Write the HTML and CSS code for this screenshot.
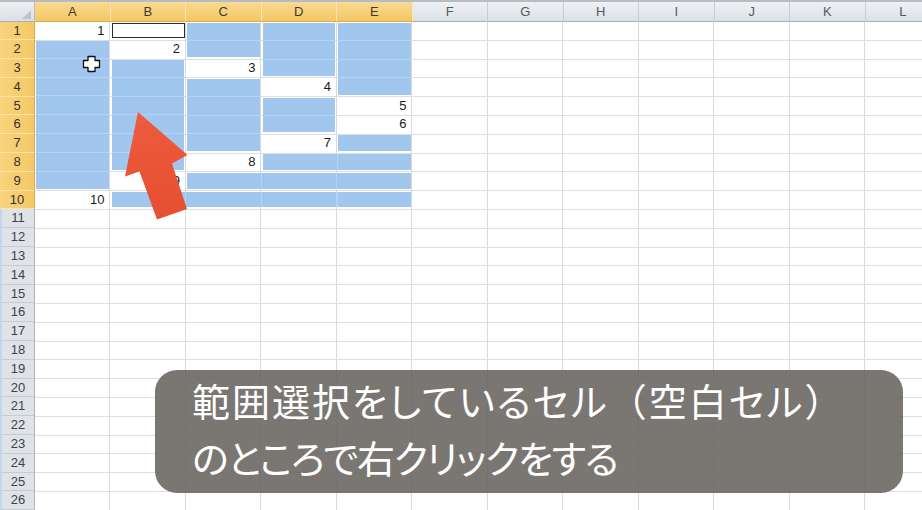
FILE: index.html
```html
<!DOCTYPE html>
<html lang="ja">
<head>
<meta charset="utf-8">
<title>Excel</title>
<link rel="stylesheet" href="styles.css">
</head>
<body>
<div class="topbar"></div>
<div class="sheet">
  <div class="corner"></div>
  <div class="ch on">A</div>
  <div class="ch on">B</div>
  <div class="ch on">C</div>
  <div class="ch on">D</div>
  <div class="ch on">E</div>
  <div class="ch">F</div>
  <div class="ch">G</div>
  <div class="ch">H</div>
  <div class="ch">I</div>
  <div class="ch">J</div>
  <div class="ch">K</div>
  <div class="ch">L</div>
  <div class="rh on">1</div>
  <div class="rh on">2</div>
  <div class="rh on">3</div>
  <div class="rh on">4</div>
  <div class="rh on">5</div>
  <div class="rh on">6</div>
  <div class="rh on">7</div>
  <div class="rh on">8</div>
  <div class="rh on">9</div>
  <div class="rh on">10</div>
  <div class="rh">11</div>
  <div class="rh">12</div>
  <div class="rh">13</div>
  <div class="rh">14</div>
  <div class="rh">15</div>
  <div class="rh">16</div>
  <div class="rh">17</div>
  <div class="rh">18</div>
  <div class="rh">19</div>
  <div class="rh">20</div>
  <div class="rh">21</div>
  <div class="rh">22</div>
  <div class="rh">23</div>
  <div class="rh">24</div>
  <div class="rh">25</div>
  <div class="rh">26</div>

  <div class="cells"></div>

  <div class="blk b-a2a9"></div>
  <div class="blk b-b3b8"></div>
  <div class="blk b-c1c2"></div>
  <div class="blk b-c4c7"></div>
  <div class="blk b-d1d3"></div>
  <div class="blk b-d5d6"></div>
  <div class="blk b-e1e4"></div>
  <div class="blk b-e7"></div>
  <div class="blk b-d8e8"></div>
  <div class="blk b-c9e9"></div>
  <div class="blk b-b10e10"></div>

  <div class="active"></div>

  <div class="val v-a1">1</div>
  <div class="val v-b2">2</div>
  <div class="val v-c3">3</div>
  <div class="val v-d4">4</div>
  <div class="val v-e5">5</div>
  <div class="val v-e6">6</div>
  <div class="val v-d7">7</div>
  <div class="val v-c8">8</div>
  <div class="val v-b9">9</div>
  <div class="val v-a10">10</div>
</div>

<svg class="overlay" width="922" height="510" viewBox="0 0 922 510" aria-hidden="true">
  <defs>
    <linearGradient id="ag" x1="0" y1="0" x2="0" y2="1">
      <stop offset="0" stop-color="#ee5b3e"/>
      <stop offset="1" stop-color="#e64f31"/>
    </linearGradient>
  </defs>
  <polygon points="138,112 187.5,155 172,163.5 187,209 157,219.5 139.5,171.5 125,176.5" fill="url(#ag)"/>
  <polygon points="88,56.5 95,56.5 95,60.5 99.5,60.5 99.5,67.5 95,67.5 95,71.5 88,71.5 88,67.5 83.5,67.5 83.5,60.5 88,60.5" fill="#fff" stroke="#111" stroke-width="1.3" stroke-linejoin="round"/>
</svg>

<div class="caption">
  <div class="cap-line">範囲選択をしているセル<span class="paren">（</span>空白セル<span class="paren">）</span></div>
  <div class="cap-line tight">のところで右クリックをする</div>
</div>
</body>
</html>
```

FILE: styles.css
```css
html, body {
  margin: 0;
  padding: 0;
}
body {
  width: 922px;
  height: 510px;
  overflow: hidden;
  background: #ffffff;
  font-family: "Liberation Sans", Arial, sans-serif;
  position: relative;
}
.topbar {
  height: 2px;
  background: #b7bcc3;
}
.sheet {
  display: grid;
  grid-template-columns: 35px repeat(12, 75.5px);
  grid-template-rows: 19.5px repeat(26, 18.8px);
  width: 941px;
}
.corner {
  grid-area: 1 / 1;
  box-sizing: border-box;
  background: linear-gradient(#eceef1, #dcdfe4);
  border-right: 1px solid #b9bec6;
  border-bottom: 1px solid #a9afb8;
  display: flex;
  align-items: flex-end;
  justify-content: flex-end;
  padding: 0 3px 2px 0;
}
.corner::after {
  content: "";
  width: 0;
  height: 0;
  border-left: 9px solid transparent;
  border-bottom: 9px solid #bfc4cb;
}
.ch {
  grid-row: 1;
  box-sizing: border-box;
  text-align: center;
  font-size: 13px;
  line-height: 19px;
  color: #555a60;
  background: linear-gradient(#eef0f3, #dde1e6);
  border-right: 1px solid #c8cdd4;
  border-bottom: 1px solid #a9afb8;
}
.ch.on {
  background: linear-gradient(#f9da92, #f3c762);
  border-right-color: #fbe5b0;
  border-bottom-color: #e2a84e;
  color: #3f3a30;
}
.rh {
  grid-column: 1;
  box-sizing: border-box;
  text-align: center;
  font-size: 13px;
  line-height: 18px;
  color: #3e4248;
  background: #dfe2e7;
  border-left: 2px solid #c3d6ee;
  border-bottom: 1px solid #c6cbd2;
  border-right: 1px solid #aeb4bc;
}
.rh.on {
  background: linear-gradient(90deg, #f8d47e, #f4c866);
  border-left: 0;
  border-bottom-color: #fbe2a6;
  border-right-color: #dca552;
  color: #35302a;
}
.cells {
  grid-row: 2 / -1;
  grid-column: 2 / -1;
  background-image:
    repeating-linear-gradient(to right, transparent 0 74.5px, #d9dbde 74.5px 75.5px),
    repeating-linear-gradient(to bottom, transparent 0 17.8px, #dcdee1 17.8px 18.8px);
}
.blk {
  margin: 1px 2px 2px 1px;
  background-color: #a2c7ef;
  background-image:
    repeating-linear-gradient(to right, transparent 0 73.5px, #b6d3f3 73.5px 74.5px, transparent 74.5px 75.5px),
    repeating-linear-gradient(to bottom, transparent 0 16.8px, #b6d3f3 16.8px 17.8px, transparent 17.8px 18.8px);
}
.b-a2a9 { grid-column: 2; grid-row: 3 / span 8; }
.b-b3b8 { grid-column: 3; grid-row: 4 / span 6; }
.b-c1c2 { grid-column: 4; grid-row: 2 / span 2; }
.b-c4c7 { grid-column: 4; grid-row: 5 / span 4; }
.b-d1d3 { grid-column: 5; grid-row: 2 / span 3; }
.b-d5d6 { grid-column: 5; grid-row: 6 / span 2; }
.b-e1e4 { grid-column: 6; grid-row: 2 / span 4; }
.b-e7 { grid-column: 6; grid-row: 8; }
.b-d8e8 { grid-column: 5 / span 2; grid-row: 9; }
.b-c9e9 { grid-column: 4 / span 3; grid-row: 10; }
.b-b10e10 { grid-column: 3 / span 4; grid-row: 11; }

.active {
  grid-column: 3;
  grid-row: 2;
  margin: 1px 1px 2px 1.5px;
  border: 1px solid #2c2c2c;
  background: #ffffff;
}
.val {
  box-sizing: border-box;
  text-align: right;
  padding-right: 6px;
  font-size: 13px;
  line-height: 18.8px;
  color: #1a1a1a;
}
.v-a1 { grid-column: 2; grid-row: 2; }
.v-b2 { grid-column: 3; grid-row: 3; }
.v-c3 { grid-column: 4; grid-row: 4; }
.v-d4 { grid-column: 5; grid-row: 5; }
.v-e5 { grid-column: 6; grid-row: 6; }
.v-e6 { grid-column: 6; grid-row: 7; }
.v-d7 { grid-column: 5; grid-row: 8; }
.v-c8 { grid-column: 4; grid-row: 9; }
.v-b9 { grid-column: 3; grid-row: 10; }
.v-a10 { grid-column: 2; grid-row: 11; }

.overlay {
  position: absolute;
  left: 0;
  top: 0;
  pointer-events: none;
}
.caption {
  position: absolute;
  left: 155px;
  top: 370px;
  width: 748px;
  height: 123px;
  box-sizing: border-box;
  padding: 1px 0 0 37px;
  border-radius: 22px;
  background: rgba(104, 100, 96, 0.88);
  color: #ffffff;
  font-family: "Noto Sans CJK JP", "Noto Sans", sans-serif;
  font-size: 38px;
  line-height: 57px;
  font-feature-settings: "palt" 1;
  letter-spacing: 2px;
  white-space: nowrap;
}
.cap-line.tight {
  letter-spacing: -1.3px;
}
.paren {
  font-feature-settings: "palt" 0;
}
```
